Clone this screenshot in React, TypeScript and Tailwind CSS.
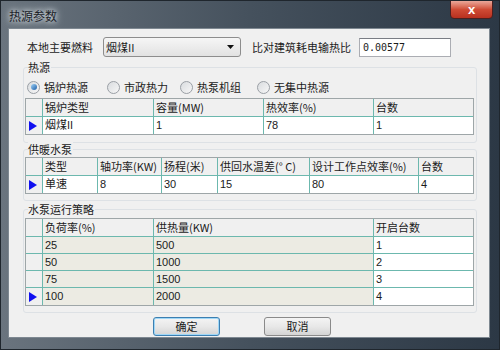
import React from "react";

const teal = "border-[#6cb8ae]";

function Tri() {
  return (
    <svg width="8" height="10" viewBox="0 0 8 10" className="ml-[3px]">
      <polygon points="0,0 8,5 0,10" fill="#1010f0" />
    </svg>
  );
}

type Col = { w?: number; label: string };

function Grid({
  cols,
  rows,
  marker,
  beigeCols = 0,
}: {
  cols: Col[];
  rows: string[][];
  marker: number;
  beigeCols?: number;
}) {
  return (
    <div className="border border-[#9ea6a8] bg-white ml-[1px] mr-[2px]">
      <div className={`flex h-[18px] border-b ${teal} bg-[#f0f0f0]`}>
        <div className={`w-[17px] shrink-0 border-r ${teal}`} />
        {cols.map((c, i) => (
          <div
            key={i}
            style={c.w ? { width: c.w } : undefined}
            className={`${c.w ? "shrink-0" : "flex-1"} ${
              i < cols.length - 1 ? `border-r ${teal}` : ""
            } px-[2px] flex items-center leading-none whitespace-nowrap`}
          >
            {c.label}
          </div>
        ))}
      </div>
      {rows.map((r, ri) => (
        <div
          key={ri}
          className={`flex h-[17px] ${ri < rows.length - 1 ? `border-b ${teal}` : "h-[16px]"}`}
        >
          <div className={`w-[17px] shrink-0 border-r ${teal} bg-[#f0f0f0] flex items-center`}>
            {ri === marker ? <Tri /> : null}
          </div>
          {r.map((v, i) => (
            <div
              key={i}
              style={cols[i].w ? { width: cols[i].w } : undefined}
              className={`${cols[i].w ? "shrink-0" : "flex-1"} ${
                i < r.length - 1 ? `border-r ${teal}` : ""
              } ${i < beigeCols ? "bg-[#ecebe3]" : "bg-white"} px-[2px] flex items-center leading-none font-['Liberation_Sans','Noto_Sans_CJK_SC',sans-serif]`}
            >
              {v}
            </div>
          ))}
        </div>
      ))}
    </div>
  );
}

function Radio({ checked, label, w }: { checked?: boolean; label: string; w: number }) {
  return (
    <div style={{ width: w }} className="flex items-center shrink-0">
      <div className="w-[13px] h-[13px] rounded-full border border-[#9a9fa5] bg-gradient-to-br from-[#d9dcdf] to-[#f7f7f7] flex items-center justify-center">
        {checked ? (
          <div className="w-[6px] h-[6px] rounded-full bg-gradient-to-br from-[#9fd2f5] to-[#1a5fa8]" />
        ) : null}
      </div>
      <span className="ml-[4px]">{label}</span>
    </div>
  );
}

function Group({
  label,
  children,
  className = "",
}: {
  label: string;
  children: React.ReactNode;
  className?: string;
}) {
  return (
    <div className={`ml-[14px] mr-[12px] border border-[#dde1e5] rounded-[3px] ${className}`}>
      <div className="-mt-[8px] ml-[4px] h-[14px] leading-[14px]">
        <span className="bg-[#f0f0f0] pr-[1px]">{label}</span>
      </div>
      {children}
    </div>
  );
}

function Btn({ label, focus }: { label: string; focus?: boolean }) {
  return (
    <div
      className={`w-[67px] h-[19px] rounded-[3px] border ${
        focus ? "border-[#3c7fb1] shadow-[inset_0_0_0_1px_#9fd7f7]" : "border-[#8a8a8a]"
      } bg-gradient-to-b from-[#f4f4f4] via-[#e8e8e8] to-[#d4d4d4] flex items-center justify-center`}
    >
      {label}
    </div>
  );
}

export default function App() {
  return (
    <div className="w-[500px] h-[350px] flex flex-col overflow-hidden bg-gradient-to-r from-[#6a747e] via-[#45515d] to-[#2c3845] border border-[#1f262d] font-['Noto_Sans_CJK_SC',sans-serif] text-[11px] text-[#1b1b1b]">
      <div className="h-[27px] shrink-0 flex items-start justify-between pl-[8px] pr-[6px]">
        <span className="mt-[6px] text-[12px] text-[#1c2228] [text-shadow:0_0_5px_#dfe7ec,0_0_8px_#dfe7ec]">热源参数</span>
        <div className="w-[43px] h-[19px] -mt-[1px] rounded-b-[4px] border border-[#4a2020] bg-gradient-to-b from-[#e9a79a] via-[#cf4b35] to-[#b8301f] flex items-center justify-center text-white text-[13px] font-bold font-['Liberation_Sans',sans-serif] leading-none">
          x
        </div>
      </div>
      <div className="flex-1 ml-[7px] mr-[9px] mb-[11px] bg-[#f0f0f0] border border-[#7e8891] flex flex-col pt-[8px]">
        <div className="h-[20px] flex items-center shrink-0">
          <span className="ml-[18px]">本地主要燃料</span>
          <div className="ml-[10px] w-[138px] h-[20px] rounded-[3px] border border-[#8d8d8d] bg-gradient-to-b from-[#f6f6f6] to-[#e2e2e2] flex items-center justify-between px-[2px]">
            <span className="font-['Noto_Sans_CJK_SC',sans-serif]">烟煤II</span>
            <svg width="7" height="4" viewBox="0 0 7 4" className="mr-[4px]">
              <polygon points="0,0 7,0 3.5,4" fill="#111" />
            </svg>
          </div>
          <span className="ml-[11px]">比对建筑耗电输热比</span>
          <div className="ml-[8px] w-[92px] h-[19px] border border-[#abadb3] border-t-[#7a7d84] bg-white flex items-center px-[3px] font-['DejaVu_Sans_Mono',monospace] text-[10px]">
            0.00577
          </div>
        </div>
        <Group label="热源" className="mt-[10px] pb-[7px]">
          <div className="flex items-center h-[14px] mt-[6px] ml-[3px]">
            <Radio checked label="锅炉热源" w={80} />
            <Radio label="市政热力" w={73} />
            <Radio label="热泵机组" w={77} />
            <Radio label="无集中热源" w={80} />
          </div>
          <div className="mt-[4px]">
            <Grid
              cols={[
                { w: 111, label: "锅炉类型" },
                { w: 110, label: "容量(MW)" },
                { w: 110, label: "热效率(%)" },
                { label: "台数" },
              ]}
              rows={[["烟煤II", "1", "78", "1"]]}
              marker={0}
            />
          </div>
        </Group>
        <Group label="供暖水泵" className="mt-[6px] pb-[6px]">
          <div className="mt-[1px]">
            <Grid
              cols={[
                { w: 55, label: "类型" },
                { w: 64, label: "轴功率(KW)" },
                { w: 56, label: "扬程(米)" },
                { w: 92, label: "供回水温差(° C)" },
                { w: 109, label: "设计工作点效率(%)" },
                { label: "台数" },
              ]}
              rows={[["单速", "8", "30", "15", "80", "4"]]}
              marker={0}
            />
          </div>
        </Group>
        <Group label="水泵运行策略" className="mt-[8px] pb-[6px]">
          <div className="mt-[2px]">
            <Grid
              cols={[
                { w: 111, label: "负荷率(%)" },
                { w: 220, label: "供热量(KW)" },
                { label: "开启台数" },
              ]}
              rows={[
                ["25", "500", "1"],
                ["50", "1000", "2"],
                ["75", "1500", "3"],
                ["100", "2000", "4"],
              ]}
              marker={3}
              beigeCols={2}
            />
          </div>
        </Group>
        <div className="flex mt-[4px] pl-[144px] gap-[44px]">
          <Btn label="确定" focus />
          <Btn label="取消" />
        </div>
      </div>
    </div>
  );
}
